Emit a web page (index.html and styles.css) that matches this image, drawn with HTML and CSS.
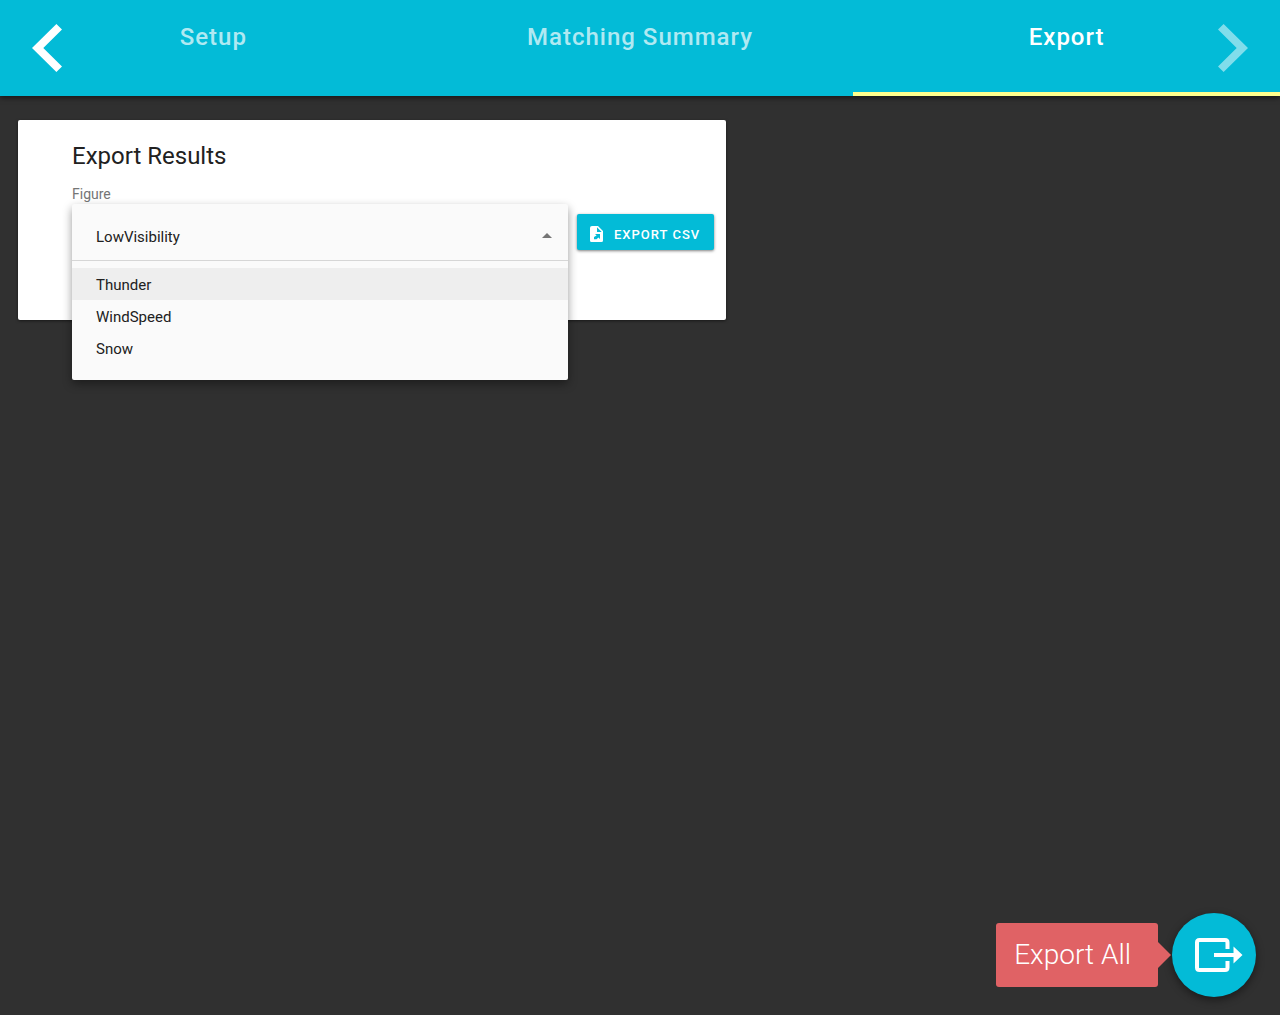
FILE: index.html
```html
<!DOCTYPE html>
<html lang="en">
<head>
<meta charset="utf-8">
<meta name="viewport" content="width=device-width, initial-scale=1">
<title>Export Results</title>
<link rel="stylesheet" href="styles.css">
</head>
<body>
<header class="topbar">
  <button class="arrow arrow-prev" type="button" aria-label="Previous step">
    <svg width="30" height="48" viewBox="0 0 30 48"><path d="M30 5.6 24.4 0 0 24l24.4 24 5.6-5.6L11.3 24z" fill="currentColor"/></svg>
  </button>
  <nav class="tabs">
    <a class="tab" href="#setup">Setup</a>
    <a class="tab" href="#summary">Matching Summary</a>
    <a class="tab tab-active" href="#export" aria-current="page">Export</a>
  </nav>
  <button class="arrow arrow-next" type="button" aria-label="Next step" disabled>
    <svg width="30" height="48" viewBox="0 0 30 48"><path d="M0 5.6 5.6 0 30 24 5.6 48 0 42.4 18.7 24z" fill="currentColor"/></svg>
  </button>
</header>
<main class="content">
  <section class="card">
    <h1 class="card-title">Export Results</h1>
    <label class="field-label" for="figure">Figure</label>
    <div class="row">
      <div class="dropdown">
        <div class="panel">
          <div class="picker">
            <select class="select" id="figure">
              <option>LowVisibility</option>
              <option>Thunder</option>
              <option>WindSpeed</option>
              <option>Snow</option>
            </select>
            <svg class="caret" width="10" height="5" viewBox="0 0 10 5"><path d="M0 5 5 0l5 5z" fill="currentColor"/></svg>
          </div>
          <ul class="options">
            <li><button class="option option-hover" type="button">Thunder</button></li>
            <li><button class="option" type="button">WindSpeed</button></li>
            <li><button class="option" type="button">Snow</button></li>
          </ul>
        </div>
      </div>
      <button class="export-csv" type="button">
        <svg width="13" height="16" viewBox="0 0 13 16"><path fill="#fff" fill-rule="evenodd" d="M2 0h6l5 5v9.500a1.500 1.500 0 0 1-1.500 1.500h-10A1.500 1.500 0 0 1 0 14.500V2Q0 0 2 0zM7 1.300V6h4.700zM5 8h5v5L8.400 11.400 6.500 13.300H4V11L6.600 9.600z"/></svg>
        <span>EXPORT CSV</span>
      </button>
    </div>
  </section>
</main>
<footer class="actions">
  <div class="tip" id="export-tip" role="tooltip">Export All</div>
  <button class="fab" type="button" aria-label="Export All" aria-describedby="export-tip">
    <svg width="48" height="34" viewBox="0 0 48 34"><path d="M32.500 11V4.500q0-2.500-2.500-2.500H4.500Q2 2 2 4.500v25Q2 32 4.500 32H30q2.500 0 2.500-2.500V23" fill="none" stroke="#fff" stroke-width="4"/><path d="M19 15h19.500V8.500L47.500 17l-9 8.500V19H19z" fill="#fff"/></svg>
  </button>
</footer>
</body>
</html>
```
FILE: styles.css
```css
* {
  box-sizing: border-box;
}

body {
  margin: 0;
  min-height: 100vh;
  display: flex;
  flex-direction: column;
  background: #303030;
  color: #212121;
  font-family: Roboto, "Liberation Sans", sans-serif;
}

button,
select {
  font: inherit;
  color: inherit;
  border: 0;
  padding: 0;
  background: none;
  cursor: pointer;
}

svg {
  display: block;
}

.topbar {
  position: relative;
  background: #03bbd7;
  color: #fff;
  box-shadow: 0 2px 5px rgba(0, 0, 0, 0.5);
}

.tabs {
  display: grid;
  grid-template-columns: repeat(3, 1fr);
}

.tab {
  height: 96px;
  padding-top: 21px;
  border-bottom: 4px solid transparent;
  color: rgba(255, 255, 255, 0.7);
  font-size: 24px;
  font-weight: 500;
  line-height: 32px;
  letter-spacing: 1px;
  text-align: center;
  text-decoration: none;
}

.tab-active {
  color: #fff;
  border-bottom-color: #ffff8d;
}

.arrow {
  position: absolute;
  top: 24px;
}

.arrow-prev {
  left: 32px;
}

.arrow-next {
  right: 32px;
  color: rgba(255, 255, 255, 0.5);
}

.content {
  flex: 1;
  padding: 24px 18px;
}

.card {
  max-width: 708px;
  min-height: 200px;
  padding: 20px 12px 20px 54px;
  background: #fff;
  border-radius: 2px;
  box-shadow: 0 1px 3px rgba(0, 0, 0, 0.5);
}

.card-title {
  margin: 0 0 10px;
  font-size: 24px;
  font-weight: 400;
  line-height: 32px;
}

.field-label {
  display: block;
  color: #757575;
  font-size: 14px;
  line-height: 24px;
}

.row {
  display: flex;
  gap: 9px;
  align-items: center;
  height: 52px;
}

.dropdown {
  position: relative;
  flex: 1;
  align-self: stretch;
}

.panel {
  position: absolute;
  top: -2px;
  left: 0;
  right: 0;
  padding-bottom: 16px;
  background: #fafafa;
  border-radius: 2px;
  box-shadow: 0 4px 10px rgba(0, 0, 0, 0.4);
  font-size: 15px;
}

.picker {
  display: grid;
  align-items: center;
  border-bottom: 1px solid #d6d6d6;
}

.picker > * {
  grid-area: 1 / 1;
}

.select {
  width: 100%;
  height: 56px;
  padding: 10px 40px 0 24px;
  appearance: none;
}

.caret {
  justify-self: end;
  margin: 6px 16px 0 0;
  color: #757575;
  pointer-events: none;
}

.options {
  margin: 0;
  padding: 7px 0 0;
  list-style: none;
}

.option {
  display: block;
  width: 100%;
  height: 32px;
  padding: 2px 24px 0;
  text-align: left;
}

.option-hover {
  background: #eee;
}

.export-csv {
  display: flex;
  align-items: center;
  gap: 11px;
  min-width: 137px;
  height: 36px;
  padding: 4px 11px 0 13px;
  background: #03bbd7;
  border-radius: 2px;
  box-shadow: 0 1px 3px rgba(0, 0, 0, 0.5);
  color: #fff;
  font-size: 13px;
  font-weight: 500;
  letter-spacing: 1px;
  white-space: nowrap;
}

.actions {
  display: flex;
  justify-content: flex-end;
  align-items: center;
  gap: 14px;
  padding: 0 24px 18px;
}

.tip {
  position: relative;
  padding: 12px 27px 12px 18px;
  background: #e06265;
  border-radius: 3px;
  color: #fff;
  font-size: 28px;
  font-weight: 300;
  line-height: 40px;
}

.tip::after {
  content: "";
  position: absolute;
  top: 19px;
  left: 100%;
  border: 13px solid transparent;
  border-left-color: #e06265;
  border-right: 0;
}

.fab {
  display: flex;
  align-items: center;
  width: 84px;
  height: 84px;
  padding-left: 23px;
  background: #03bbd7;
  border-radius: 50%;
  box-shadow: 0 3px 8px rgba(0, 0, 0, 0.45);
}
```
